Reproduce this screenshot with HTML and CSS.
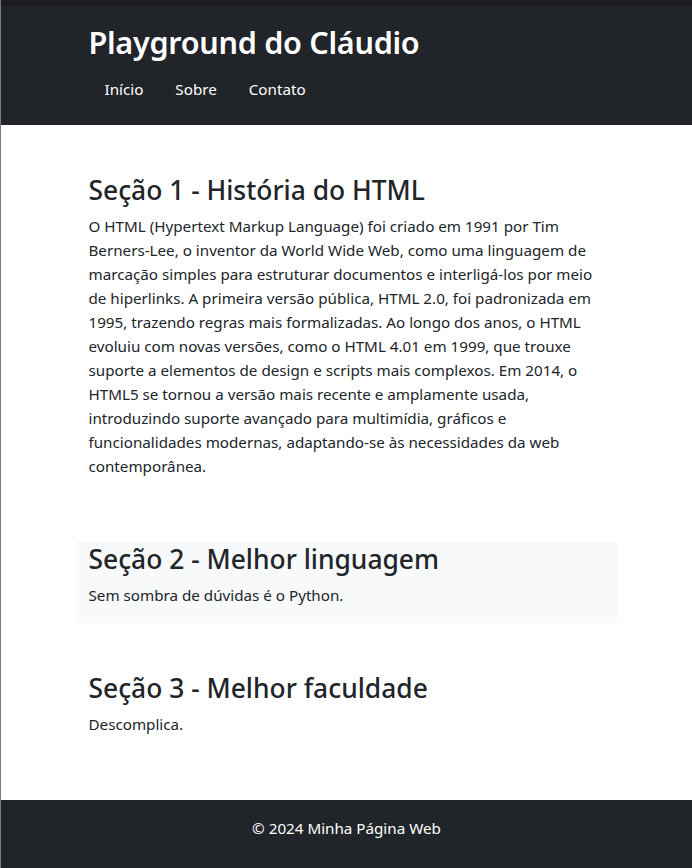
FILE: index.html
```html
<!DOCTYPE html>
<html lang="pt-BR">
<head>
<meta charset="utf-8">
<title>Playground do Cláudio</title>
<link rel="stylesheet" href="styles.css">
</head>
<body>
<div class="frame">
  <div class="topstrip"></div>
  <header class="site-header">
    <div class="container">
      <h1 class="brand">Playground do Cláudio</h1>
      <nav class="nav">
        <a href="#" class="nav-link">Início</a>
        <a href="#" class="nav-link">Sobre</a>
        <a href="#" class="nav-link">Contato</a>
      </nav>
    </div>
  </header>
  <main class="main">
    <section class="container section">
      <h2 class="section-title">Seção 1 - História do HTML</h2>
      <p class="section-text">O HTML (Hypertext Markup Language) foi criado em 1991 por Tim Berners-Lee, o inventor da World Wide Web, como uma linguagem de marcação simples para estruturar documentos e interligá-los por meio de hiperlinks. A primeira versão pública, HTML 2.0, foi padronizada em 1995, trazendo regras mais formalizadas. Ao longo dos anos, o HTML evoluiu com novas versões, como o HTML 4.01 em 1999, que trouxe suporte a elementos de design e scripts mais complexos. Em 2014, o HTML5 se tornou a versão mais recente e amplamente usada, introduzindo suporte avançado para multimídia, gráficos e funcionalidades modernas, adaptando-se às necessidades da web contemporânea.</p>
    </section>
    <section class="container section section-light">
      <h2 class="section-title">Seção 2 - Melhor linguagem</h2>
      <p class="section-text">Sem sombra de dúvidas é o Python.</p>
    </section>
    <section class="container section">
      <h2 class="section-title">Seção 3 - Melhor faculdade</h2>
      <p class="section-text">Descomplica.</p>
    </section>
  </main>
  <footer class="site-footer">
    <p class="footer-text">© 2024 Minha Página Web</p>
  </footer>
</div>
</body>
</html>
```
FILE: styles.css
```css
* { box-sizing: border-box; }
html, body {
  margin: 0;
  padding: 0;
  background: #fff;
}
body {
  font-family: "Noto Sans", "Open Sans", sans-serif;
  font-size: 15.2px;
  line-height: 24px;
  color: #212529;
}
.frame {
  border-left: 1px solid #7a7a7a;
  min-height: 868px;
  display: flex;
  flex-direction: column;
}
.topstrip {
  height: 6px;
  background: #1b1c20;
}
.container {
  width: 540px;
  margin-left: auto;
  margin-right: auto;
  padding: 0 12px;
}
.site-header {
  background: #212529;
  color: #fff;
  padding: 17px 0 16px;
}
.brand {
  margin: 0 0 8px;
  font-size: 30.6px;
  line-height: 38.4px;
  font-weight: 600;
  letter-spacing: -0.3px;
  color: #fff;
}
.nav {
  display: flex;
}
.nav-link {
  display: block;
  padding: 8px 16px;
  color: #fff;
  text-decoration: none;
}
.main {
  flex: 1;
  display: flow-root;
}
.section {
  display: flow-root;
  margin-top: 48px;
  margin-bottom: 48px;
}
.section-light {
  background: #f8f9fa;
}
.section-title {
  margin: 0 0 8px;
  padding-top: 1px;
  font-size: 26.4px;
  line-height: 32px;
  font-weight: 500;
  color: #212529;
}
.section-text {
  margin: 0 0 16px;
}
.site-footer {
  background: #212529;
  color: #fff;
  text-align: center;
  padding: 16px 0 28px;
}
.footer-text {
  margin: 0;
}
```
